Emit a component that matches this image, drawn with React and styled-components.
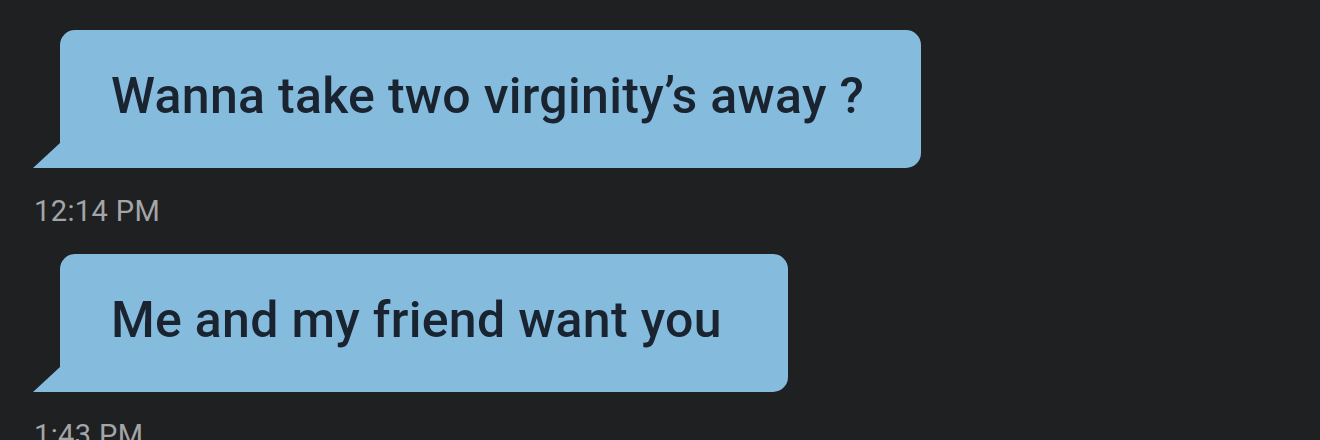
import React from "react";
import styled, { createGlobalStyle } from "styled-components";

const GlobalStyle = createGlobalStyle`
  html, body {
    margin: 0;
    padding: 0;
    background: #1f2022;
  }
  body {
    font-family: Roboto, "Liberation Sans", sans-serif;
  }
`;

const messages = [
  { text: "Wanna take two virginity\u2019s away ?", time: "12:14 PM", pad: 57 },
  { text: "Me and my friend want you", time: "1:43 PM", pad: 66 },
];

export default function App() {
  return (
    <>
      <GlobalStyle />
      <Thread>
        {messages.map((m) => (
          <Message key={m.time}>
            <BubbleRow>
              <Tail />
              <Bubble $pad={m.pad}>{m.text}</Bubble>
            </BubbleRow>
            <Time>{m.time}</Time>
          </Message>
        ))}
      </Thread>
    </>
  );
}

const Thread = styled.div`
  width: 1320px;
  height: 440px;
  overflow: hidden;
  padding: 30px 0 0 33px;
  box-sizing: border-box;
  display: flex;
  flex-direction: column;
`;

const Message = styled.div`
  display: flex;
  flex-direction: column;
  align-items: flex-start;
`;

const BubbleRow = styled.div`
  display: flex;
  align-items: flex-end;
`;

const Tail = styled.div`
  width: 27px;
  height: 25px;
  background: #85bcde;
  clip-path: polygon(100% 0, 100% 100%, 0 100%);
`;

const Bubble = styled.div`
  height: 138px;
  box-sizing: border-box;
  display: flex;
  align-items: center;
  padding: 0 ${(p) => p.$pad}px 6px 51px;
  background: #85bcde;
  border-radius: 15px 15px 15px 0;
  color: #1a2330;
  font-size: 50px;
  font-weight: 500;
  letter-spacing: 0.3px;
  white-space: nowrap;
`;

const Time = styled.div`
  margin: 26px 0 26px 1px;
  color: #a3a5a8;
  font-size: 29px;
  line-height: 34px;
  letter-spacing: 0.4px;
`;
